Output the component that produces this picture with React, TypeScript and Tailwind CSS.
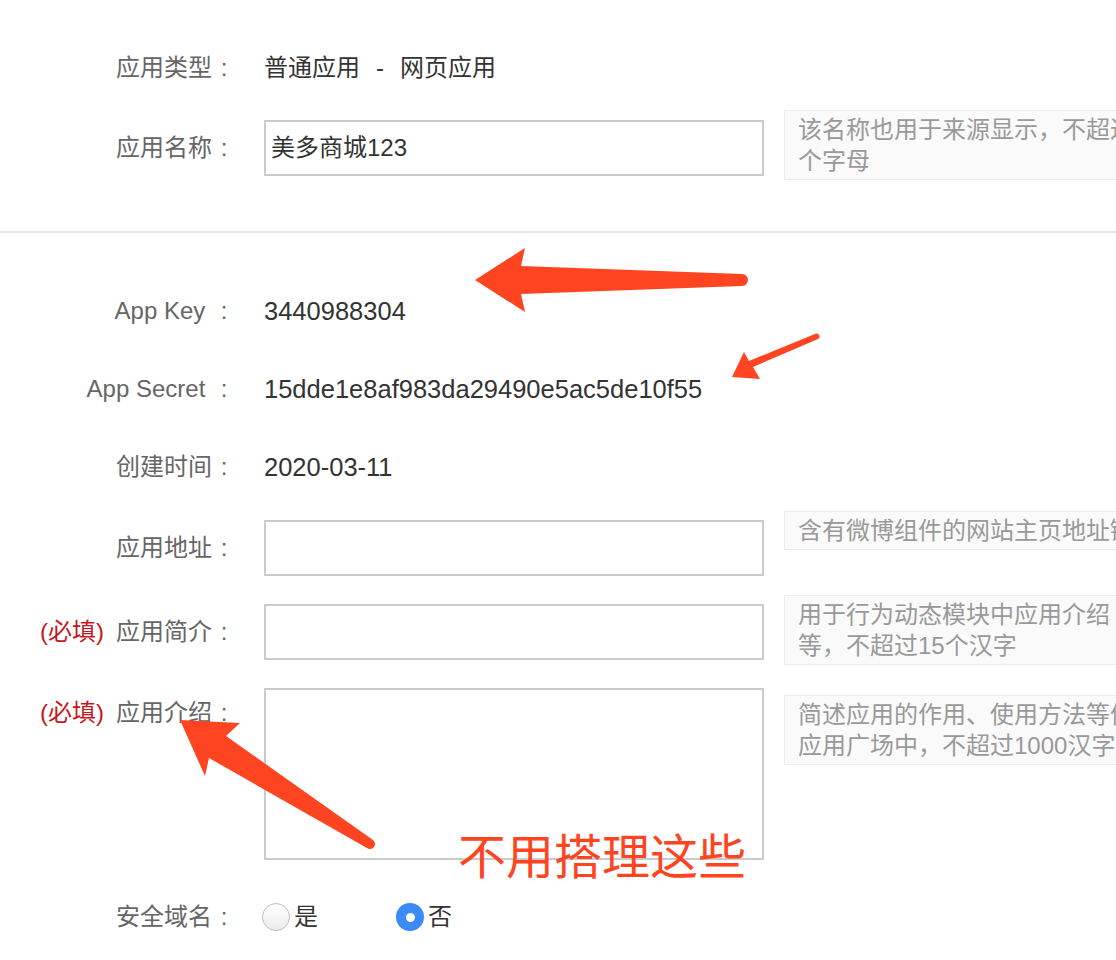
import React from 'react';

const Colon = () => <span className="inline-block w-[24px] text-center">:</span>;

function Label({ text, required, className = 'h-[36px] leading-[36px]' }: { text: string; required?: boolean; className?: string }) {
  return (
    <div className={`w-[236px] shrink-0 text-right text-[#666] whitespace-nowrap ${className}`}>
      {required && <span className="text-[#c8161d] mr-[12px]">(必填)</span>}
      {text}
      <Colon />
    </div>
  );
}

function Hint({ lines, className = '' }: { lines: string[]; className?: string }) {
  return (
    <div className={`ml-[20px] w-[420px] shrink-0 border border-[#ececec] bg-[#fafafa] px-[13px] py-[3px] text-[#999] leading-[31px] whitespace-nowrap ${className}`}>
      {lines.map((l) => (
        <div key={l}>{l}</div>
      ))}
    </div>
  );
}

export default function App() {
  return (
    <div className="relative w-[1116px] h-[960px] overflow-hidden bg-white text-[24px] font-['Liberation_Sans','Noto_Sans_CJK_SC',sans-serif]">
      <div className="pt-[50px]">
        <div className="flex">
          <Label text="应用类型" />
          <div className="ml-[28px] leading-[36px] text-[#333] whitespace-nowrap">
            普通应用<span className="mx-[16px]">-</span>网页应用
          </div>
        </div>

        <div className="mt-[34px] flex items-start">
          <Label text="应用名称" className="h-[56px] leading-[56px]" />
          <div className="ml-[28px] w-[500px] h-[56px] shrink-0 border-2 border-[#cacaca] px-[5px] leading-[52px] text-[#333]">美多商城123</div>
          <Hint className="mt-[-10px]" lines={['该名称也用于来源显示，不超过10个汉字或20', '个字母']} />
        </div>
      </div>

      <div className="mt-[51px] h-[2px] bg-[#e6e6e6]" />

      <div className="mt-[60px] flex">
        <Label text="App Key " />
        <div className="ml-[28px] leading-[36px] text-[25.5px] text-[#333]">3440988304</div>
      </div>
      <div className="mt-[42px] flex">
        <Label text="App Secret " />
        <div className="ml-[28px] leading-[36px] text-[25.5px] text-[#333]">15dde1e8af983da29490e5ac5de10f55</div>
      </div>
      <div className="mt-[42px] flex">
        <Label text="创建时间" />
        <div className="ml-[28px] leading-[36px] text-[25.5px] text-[#333]">2020-03-11</div>
      </div>

      <div className="mt-[35px] flex items-start">
        <Label text="应用地址" className="h-[56px] leading-[56px]" />
        <div className="ml-[28px] w-[500px] h-[56px] shrink-0 border-2 border-[#cacaca]" />
        <Hint className="mt-[-9px]" lines={['含有微博组件的网站主页地址链接']} />
      </div>

      <div className="mt-[28px] flex items-start">
        <Label text="应用简介" required className="h-[56px] leading-[56px]" />
        <div className="ml-[28px] w-[500px] h-[56px] shrink-0 border-2 border-[#cacaca]" />
        <Hint className="mt-[-9px]" lines={['用于行为动态模块中应用介绍', '等，不超过15个汉字']} />
      </div>

      <div className="mt-[23px] flex items-start">
        <Label text="应用介绍" required className="h-[50px] leading-[50px]" />
        <div className="ml-[28px] w-[500px] h-[172px] shrink-0 border-2 border-[#cacaca]" />
        <Hint className="mt-[7px]" lines={['简述应用的作用、使用方法等信息，将显示在', '应用广场中，不超过1000汉字']} />
      </div>

      <div className="mt-[39px] flex">
        <Label text="安全域名" />
        <div className="ml-[26px] flex items-center leading-[36px] text-[#333]">
          <span className="w-[28px] h-[28px] rounded-full border border-[#bdbdbd] bg-gradient-to-b from-white to-[#ececec]" />
          <span className="ml-[4px]">是</span>
          <span className="ml-[78px] w-[28px] h-[28px] rounded-full bg-[#3b8bf6] flex items-center justify-center">
            <span className="w-[9px] h-[9px] rounded-full bg-white" />
          </span>
          <span className="ml-[4px]">否</span>
        </div>
      </div>

      {/* annotations drawn over the form */}
      <svg className="absolute inset-0 pointer-events-none" width="1116" height="960" viewBox="0 0 1116 960">
        <path d="M475,280 L525,248 L521,266 L742,274 A6,6 0 0 1 742,286 L521,294 L525,312 Z" fill="#ff4422" />
        <path d="M732,377 L744,352 L749,361 L815,334 A2.6,2.6 0 0 1 818,339 L753,367 L760,379 Z" fill="#ff4422" />
        <path d="M180,720 L240,723 L226,736 L373,840 A5,5 0 0 1 367,848 L209,758 L205,776 Z" fill="#ff4422" />
      </svg>
      <div className="absolute left-[458px] top-[834px] text-[48px] leading-[48px] text-[#ff4422] whitespace-nowrap">不用搭理这些</div>
    </div>
  );
}
